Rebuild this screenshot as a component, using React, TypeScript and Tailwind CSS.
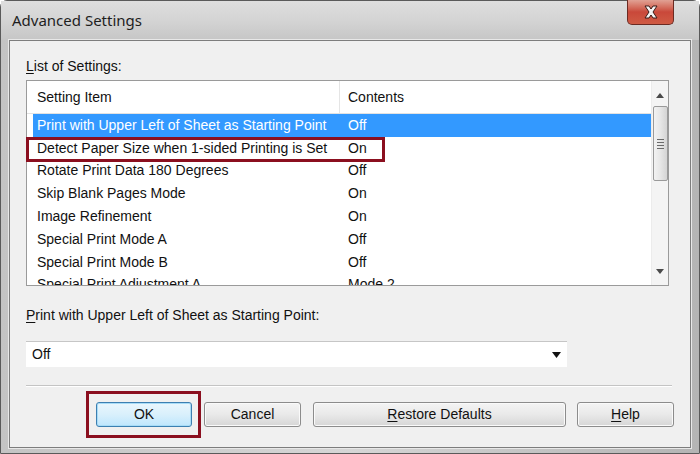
import React from 'react';

const rows = [
  ['Print with Upper Left of Sheet as Starting Point', 'Off'],
  ['Detect Paper Size when 1-sided Printing is Set', 'On'],
  ['Rotate Print Data 180 Degrees', 'Off'],
  ['Skip Blank Pages Mode', 'On'],
  ['Image Refinement', 'On'],
  ['Special Print Mode A', 'Off'],
  ['Special Print Mode B', 'Off'],
  ['Special Print Adjustment A', 'Mode 2'],
];

function Btn({ children, w, focus }: { children: React.ReactNode; w: string; focus?: boolean }) {
  return (
    <div
      className={`${w} h-[25px] rounded-[3px] border flex items-center justify-center text-[14px] text-[#111] ${
        focus
          ? 'border-[#3c7fb1] bg-gradient-to-b from-[#eaf6fd] via-[#d9f0fc] to-[#bee6fd] shadow-[inset_0_0_0_1px_#a8dcf7]'
          : 'border-[#8c8c8c] bg-gradient-to-b from-[#f4f4f4] via-[#e9e9e9] to-[#d6d6d6] shadow-[inset_0_0_0_1px_#fafafa]'
      }`}
    >
      {children}
    </div>
  );
}

export default function App() {
  return (
    <div className="w-[700px] h-[454px] relative overflow-hidden bg-[#fff]" style={{ fontFamily: '"Liberation Sans", Arial, sans-serif' }}>
      <div className="w-[700px] h-[454px] rounded-t-[7px] border border-[#5a5a5a] bg-gradient-to-r from-[#c4c4c4] via-[#d6d6d6] to-[#b4b4b4] flex flex-col">
        {/* title bar */}
        <div className="h-[39px] shrink-0 flex items-center pl-[11px] pb-[1px] bg-gradient-to-b from-[#dedede] via-[#d4d4d4] to-[#c6c6c6]">
          <span className="text-[15px] text-[#1e1e1e]" style={{ fontFamily: '"Noto Sans", "Open Sans", sans-serif' }}>
            Advanced Settings
          </span>
        </div>
        <div className="absolute top-0 left-[627px] w-[47px] h-[25px] rounded-b-[5px] border border-[#6b2a22] border-t-0 bg-gradient-to-b from-[#e0a194] via-[#c9483a] to-[#cf5b44] flex items-center justify-center">
          <svg width="16" height="14" viewBox="0 0 16 14">
            <path d="M2 1h4l2 3 2-3h4l-4 6 4 6h-4l-2-3-2 3H2l4-6z" fill="#f4f4f4" stroke="#3a1a16" strokeWidth="1" />
          </svg>
        </div>

        {/* client area */}
        <div className="mx-[8px] h-[408px] shrink-0 border border-[#7d7d7d] bg-[#f0f0f0] shadow-[0_0_0_1px_#e8e8e8] pl-[16px] flex flex-col">
          <div className="pt-[15px] h-[39px] shrink-0 text-[14px] text-[#111]">
            <span className="underline underline-offset-2">L</span>ist of Settings:
          </div>

          {/* list */}
          <div className="w-[643px] h-[206px] shrink-0 border border-[#9a9a9a] bg-white flex overflow-hidden">
            <div className="flex-1 flex flex-col overflow-hidden">
              <div className="h-[33px] shrink-0 flex items-center border-b border-[#e2e2e2] text-[14px] text-[#111]">
                <div className="w-[313px] pl-[10px] h-full flex items-center border-r border-[#e5e5e5]">Setting Item</div>
                <div className="pl-[8px]">Contents</div>
              </div>
              <div className="pl-[6px] flex flex-col shrink-0">
                {rows.map(([a, b], i) => (
                  <div
                    key={i}
                    className={`h-[22.8px] shrink-0 flex items-center text-[14px] ${i === 0 ? 'bg-[#3399ff] text-white' : 'text-[#111]'}`}
                  >
                    <div className="w-[307px] pl-[4px] whitespace-nowrap">{a}</div>
                    <div className="pl-[8px]">{b}</div>
                  </div>
                ))}
              </div>
            </div>
            {/* scrollbar */}
            <div className="w-[17px] shrink-0 bg-[#f4f4f4] border-l border-[#ececec] flex flex-col items-center">
              <div className="h-[25px] flex items-center justify-center pt-[4px]">
                <svg width="8" height="5" viewBox="0 0 8 5"><path d="M0 5L4 0L8 5Z" fill="#4a4a4a" /></svg>
              </div>
              <div className="w-[15px] h-[75px] rounded-[2px] border border-[#9a9a9a] bg-gradient-to-r from-[#f2f2f2] via-[#e6e6e6] to-[#d4d4d4] flex items-center justify-center">
                <div className="flex flex-col gap-[2px]">
                  <div className="w-[7px] h-[1px] bg-[#6a6a6a]" />
                  <div className="w-[7px] h-[1px] bg-[#6a6a6a]" />
                  <div className="w-[7px] h-[1px] bg-[#6a6a6a]" />
                  <div className="w-[7px] h-[1px] bg-[#6a6a6a]" />
                </div>
              </div>
              <div className="flex-1" />
              <div className="h-[22px] flex items-center justify-center pb-[6px]">
                <svg width="8" height="5" viewBox="0 0 8 5"><path d="M0 0L4 5L8 0Z" fill="#4a4a4a" /></svg>
              </div>
            </div>
          </div>

          <div className="pt-[19px] h-[55px] shrink-0 text-[14px] text-[#111]">
            <span className="underline underline-offset-2">P</span>rint with Upper Left of Sheet as Starting Point:
          </div>

          <div className="w-[541px] h-[26px] shrink-0 bg-white border-t border-[#c6c6c6] flex items-center justify-between pl-[6px] pr-[6px] text-[14px] text-[#111]">
            <span>Off</span>
            <svg width="9" height="6" viewBox="0 0 9 6"><path d="M0 0L4.5 6L9 0Z" fill="#111" /></svg>
          </div>

          <div className="mt-[18px] w-[646px] h-[2px] shrink-0 border-t border-[#c4c4c4] border-b border-b-white" />

          <div className="mt-[15px] flex">
            <div className="ml-[70px]">
              <Btn w="w-[96px]" focus>OK</Btn>
            </div>
            <div className="ml-[12px]">
              <Btn w="w-[97px]">Cancel</Btn>
            </div>
            <div className="ml-[12px]">
              <Btn w="w-[253px]">
                <span className="underline underline-offset-2">R</span>estore Defaults
              </Btn>
            </div>
            <div className="ml-[11px]">
              <Btn w="w-[97px]">
                <span className="underline underline-offset-2">H</span>elp
              </Btn>
            </div>
          </div>
        </div>
      </div>

      {/* annotation outlines */}
      <div className="absolute left-[26px] top-[137px] w-[359px] h-[25px] border-[3px] border-[#8b0f1f]" />
      <div className="absolute left-[86px] top-[391px] w-[115px] h-[47px] border-[3px] border-[#8b0f1f]" />
    </div>
  );
}
